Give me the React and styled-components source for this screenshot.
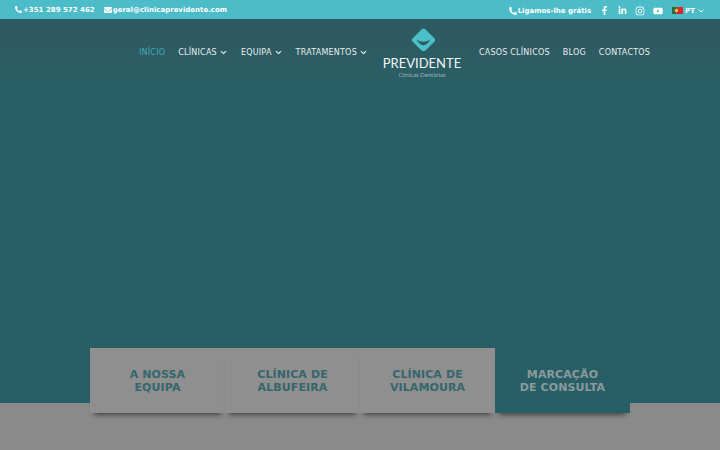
import styled, { createGlobalStyle } from 'styled-components';
import { FaEnvelope, FaFacebookF, FaInstagram, FaLinkedinIn, FaPhoneAlt, FaYoutube } from 'react-icons/fa';
import { LuChevronDown } from 'react-icons/lu';

const GlobalStyle = createGlobalStyle`
  html, body {
    margin: 0;
    padding: 0;
    background: #8a8a8a;
    font-family: "DejaVu Sans", sans-serif;
  }
`;

const leftNav = [
  { label: 'INÍCIO', active: true },
  { label: 'CLÍNICAS', arrow: true },
  { label: 'EQUIPA', arrow: true },
  { label: 'TRATAMENTOS', arrow: true },
];

const rightNav = [{ label: 'CASOS CLÍNICOS' }, { label: 'BLOG' }, { label: 'CONTACTOS' }];

const cards = [
  { id: 'equipa', lines: ['A NOSSA', 'EQUIPA'] },
  { id: 'albufeira', lines: ['CLÍNICA DE', 'ALBUFEIRA'] },
  { id: 'vilamoura', lines: ['CLÍNICA DE', 'VILAMOURA'] },
  { id: 'consulta', lines: ['MARCAÇÃO', 'DE CONSULTA'], accent: true },
];

const NavItems = ({ items }) =>
  items.map(({ label, active, arrow }) => (
    <NavLink key={label} $active={active}>
      {label}
      {arrow && <LuChevronDown size={9} strokeWidth={3} />}
    </NavLink>
  ));

export default function App() {
  return (
    <>
      <GlobalStyle />
      <Page>
        <TopBar>
          <TopGroup>
            <TopText><FaPhoneAlt size={7} />+351 289 572 462</TopText>
            <TopText><FaEnvelope size={8} />geral@clinicaprevidente.com</TopText>
          </TopGroup>
          <RightGroup>
            <TopText><FaPhoneAlt size={8} />Ligamos-lhe grátis</TopText>
            <Socials>
              <Social><FaFacebookF size={9} /></Social>
              <Social><FaLinkedinIn size={9} /></Social>
              <Social><FaInstagram size={10} /></Social>
              <Social><FaYoutube size={10} /></Social>
            </Socials>
            <Lang>
              <svg width="11" height="7" viewBox="0 0 11 7">
                <rect width="4.4" height="7" fill="#2f6b3a" />
                <rect x="4.4" width="6.6" height="7" fill="#d8262c" />
                <circle cx="4.4" cy="3.5" r="1.7" fill="#e6c84a" />
              </svg>
              PT
              <LuChevronDown size={8} strokeWidth={3} />
            </Lang>
          </RightGroup>
        </TopBar>
        <Hero>
          <Header>
            <Nav><NavItems items={leftNav} /></Nav>
            <Logo>
              <svg width="25" height="24" viewBox="0 0 25 24">
                <path d="M12.5 0.5 Q13.5 0.5 14.5 1.5 L23.5 10.5 Q25 12 23.5 13.5 L14.5 22.5 Q12.5 24 10.5 22.5 L1.5 13.5 Q0 12 1.5 10.5 L10.5 1.5 Q11.5 0.5 12.5 0.5 Z" fill="#4bc0c8" />
                <path d="M5.5 11.5 Q12.5 23 19.5 11.5 Q12.5 16 5.5 11.5 Z" fill="#2e5b62" />
              </svg>
              <LogoName>PREVIDENTE</LogoName>
              <LogoSub>Clínicas Dentárias</LogoSub>
            </Logo>
            <Nav><NavItems items={rightNav} /></Nav>
          </Header>
        </Hero>
        <Cards>
          {cards.map(({ id, lines, accent }) => (
            <Card key={id} $accent={accent}>
              {lines.map((line) => (
                <span key={line}>{line}</span>
              ))}
            </Card>
          ))}
        </Cards>
      </Page>
    </>
  );
}

const Page = styled.div`
  width: 720px;
  height: 450px;
  overflow: hidden;
  background: #8a8a8a;
`;

const TopBar = styled.div`
  height: 19px;
  padding: 0 15px;
  display: flex;
  align-items: center;
  justify-content: space-between;
  background: #4bbcc8;
  color: #fff;
`;

const TopGroup = styled.div`
  display: flex;
  align-items: center;
  gap: 9px;
`;

const RightGroup = styled.div`
  display: flex;
  align-items: center;
  gap: 4px;
  padding-top: 2px;
`;

const TopText = styled.span`
  display: flex;
  align-items: center;
  gap: 1px;
  font-size: 7px;
  font-weight: 700;
`;

const Socials = styled.div`
  display: flex;
  align-items: center;
`;

const Social = styled.span`
  width: 18px;
  display: flex;
  justify-content: center;
`;

const Lang = styled.div`
  display: flex;
  align-items: center;
  gap: 2px;
  margin-left: 1px;
  font-size: 7px;
  font-weight: 700;
`;

const Hero = styled.div`
  height: 384px;
  background: linear-gradient(#2e5b62 0, #2e5b62 30px, #285f66 65px);
`;

const Header = styled.header`
  height: 62px;
  padding-left: 139px;
  display: flex;
  align-items: center;
`;

const Nav = styled.nav`
  display: flex;
  gap: 13px;
  margin-top: 5px;
`;

const NavLink = styled.a`
  display: flex;
  align-items: center;
  gap: 2px;
  font-size: 8px;
  letter-spacing: 0.22px;
  color: ${({ $active }) => ($active ? '#3fa9b4' : '#e6eeef')};
`;

const Logo = styled.div`
  width: 78px;
  margin: 0 18px 0 15px;
  padding-top: 9px;
  align-self: flex-start;
  display: flex;
  flex-direction: column;
  align-items: center;

  svg {
    margin-left: 3px;
  }
`;

const LogoName = styled.div`
  margin-top: 4px;
  font-family: "Lato", sans-serif;
  font-size: 13px;
  line-height: 15px;
  color: #f1f5f5;
  white-space: nowrap;
`;

const LogoSub = styled.div`
  font-family: "Lato", sans-serif;
  font-size: 6px;
  line-height: 8px;
  color: #9fb4b6;
  white-space: nowrap;
`;

const Cards = styled.div`
  width: 540px;
  margin: -55px auto 0;
  display: grid;
  grid-template-columns: repeat(4, 1fr);
`;

const Card = styled.div`
  height: 65px;
  display: flex;
  flex-direction: column;
  align-items: center;
  justify-content: center;
  font-size: 11px;
  line-height: 13px;
  font-weight: 700;
  letter-spacing: 0.1px;
  background: ${({ $accent }) => ($accent ? '#285f66' : '#8f8f8f')};
  color: ${({ $accent }) => ($accent ? '#8a9a9d' : '#34666d')};
  box-shadow: 0 6px 5px -4px rgba(0, 0, 0, 0.5);
`;
